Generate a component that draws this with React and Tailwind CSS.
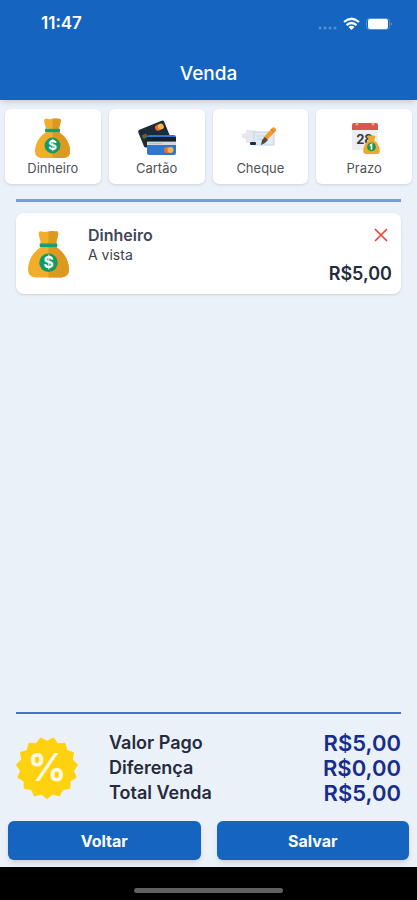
import React from "react";

function MoneyBag({ className }) {
  return (
    <svg viewBox="0 0 42 48" className={className} aria-hidden="true">
      <path d="M11 3Q11 0 14 1Q17 2 21 1Q25 0 28 1Q31 0 31 3C31 7 29 9 29 13H13C13 9 11 7 11 3Z" fill="#f2ad2b" />
      <path d="M21 1Q25 0 28 1Q31 0 31 3C31 7 29 9 29 13H21Z" fill="#dd9820" />
      <path d="M13 17H29C37 22 42 31 42 40Q42 48 34 48H8Q0 48 0 40C0 31 5 22 13 17Z" fill="#f2ad2b" />
      <path d="M21 17H29C37 22 42 31 42 40Q42 48 34 48H21Z" fill="#dd9820" />
      <rect x="12" y="13" width="18" height="4" rx="1" fill="#169f66" />
      <circle cx="21" cy="33" r="9.5" fill="#0f9b63" />
      <text x="21" y="38.5" textAnchor="middle" fontSize="16" fontWeight="700" fill="#fff">$</text>
    </svg>
  );
}

function CardsIcon() {
  return (
    <svg viewBox="0 0 40 40" className="h-10 w-10" aria-hidden="true">
      <g transform="rotate(-22 16 16)">
        <rect x="3" y="7" width="28" height="19" rx="2" fill="#1e2a36" />
        <rect x="5" y="13" width="5" height="4" rx="1" fill="#6d5c38" />
        <circle cx="23" cy="12" r="3" fill="#ef6a3a" />
        <circle cx="26" cy="12" r="3" fill="#f7b64a" />
      </g>
      <rect x="10" y="17" width="29" height="20" rx="2" fill="#2f77cc" />
      <rect x="10" y="19" width="29" height="4" fill="#15202c" />
      <rect x="10" y="24" width="29" height="3" fill="#d5d9df" />
      <rect x="12" y="25" width="13" height="1" fill="#dcb98d" />
      <circle cx="30" cy="32" r="3" fill="#ef6a3a" />
      <circle cx="33.5" cy="32" r="3" fill="#f7b64a" />
    </svg>
  );
}

function ChequeIcon() {
  return (
    <svg viewBox="0 0 40 40" className="h-10 w-10" aria-hidden="true">
      <path d="M2 16L6 15V12H14L17 14V25H6V21L2 20Z" fill="#e6e8eb" />
      <rect x="14" y="14" width="20" height="13" fill="#dfebf6" stroke="#c2d6e6" />
      <path d="M17 18H24M17 21H22" stroke="#c6d8e8" />
      <rect x="10" y="24" width="6" height="3" rx="1" fill="#1c2b50" />
      <path d="M23 20L32 10Q34 8 36 11Q37 13 35 14L27 22Z" fill="#f39b2e" />
      <path d="M21 27L22 22L25 19L28 22L25 25Z" fill="#4a4b4a" />
      <path d="M31 11L34 14" stroke="#d7682a" />
    </svg>
  );
}

function CalendarIcon() {
  return (
    <svg viewBox="0 0 40 40" className="h-10 w-10" aria-hidden="true">
      <rect x="8" y="7" width="26" height="25" rx="2" fill="#eeeef0" />
      <path d="M8 12V7Q8 5 10 5H32Q34 5 34 7V12Z" fill="#dc5555" />
      <circle cx="13" cy="6" r="1.5" fill="#f0b05a" />
      <circle cx="29" cy="6" r="1.5" fill="#f0b05a" />
      <text x="20.5" y="26" textAnchor="middle" fontSize="13" fontWeight="700" fill="#333a44">28</text>
      <svg x="19" y="17" width="17" height="19" viewBox="0 0 42 48">
        <path d="M11 3Q15 0 21 2Q27 0 31 3L28 14C37 20 42 31 42 40Q42 48 34 48H8Q0 48 0 40C0 31 5 20 14 14Z" fill="#f0a82b" />
        <circle cx="21" cy="30" r="11" fill="#179a5c" />
        <path d="M17 27L21 24V37" fill="none" stroke="#fff" strokeWidth="4" />
      </svg>
    </svg>
  );
}

const points = Array.from({ length: 30 }, (_, i) => {
  const r = i % 2 ? 26 : 30;
  const a = (i * Math.PI) / 15 + Math.PI / 2;
  return `${31 + r * Math.cos(a)},${31 + r * Math.sin(a)}`;
}).join(" ");

function PercentBadge() {
  return (
    <svg viewBox="0 0 62 62" className="h-[62px] w-[62px] shrink-0" aria-hidden="true">
      <polygon points={points} fill="#ffd20f" stroke="#ffd20f" strokeWidth="2" strokeLinejoin="round" />
      <text x="31" y="44" textAnchor="middle" fontSize="38" fontWeight="700" fill="#fff9e3">%</text>
    </svg>
  );
}

const methods = [
  { label: "Dinheiro", icon: <MoneyBag className="h-10 w-[35px]" /> },
  { label: "Cartão", icon: <CardsIcon /> },
  { label: "Cheque", icon: <ChequeIcon /> },
  { label: "Prazo", icon: <CalendarIcon /> },
];

const totals = [
  ["Valor Pago", "R$5,00"],
  ["Diferença", "R$0,00"],
  ["Total Venda", "R$5,00"],
];

export default function App() {
  return (
    <div className="flex min-h-screen flex-col bg-[#ebf1f8] font-['Inter','Liberation_Sans',sans-serif] text-[#252b3d]">
      <header className="bg-[#1565c0] text-white shadow-md">
        <div className="flex h-12 items-center justify-between pr-[25px] pl-[41px]">
          <span className="text-[17px] font-semibold">11:47</span>
          <svg viewBox="0 0 75 16" className="h-4 w-[75px]" aria-hidden="true">
            <g fill="#5590d4">
              <circle cx="3" cy="12" r="1.5" />
              <circle cx="8" cy="12" r="1.5" />
              <circle cx="13" cy="12" r="1.5" />
              <circle cx="18" cy="12" r="1.5" />
            </g>
            <g fill="none" stroke="#fff" strokeWidth="2.2">
              <path d="M27 6Q34.5 -0.5 42 6" />
              <path d="M29.5 9.2Q34.5 4.8 39.5 9.2" />
            </g>
            <path d="M31.5 11Q34.5 8.5 37.5 11L34.5 14Z" fill="#fff" />
            <rect x="49.5" y="2.5" width="23" height="11" rx="3" fill="none" stroke="#5590d4" />
            <path d="M74 6Q75.500 8 74 10Z" fill="#73a3dc" />
            <rect x="51" y="3" width="20" height="10" rx="2" fill="#fff" />
          </svg>
        </div>
        <h1 className="flex h-[52px] items-center justify-center text-[19px] font-medium">Venda</h1>
      </header>

      <main className="flex flex-1 flex-col">
        <div className="grid grid-cols-4 gap-2 px-[5px] pt-[9px]">
          {methods.map((m) => (
            <button key={m.label} type="button" className="flex h-[75px] flex-col items-center rounded-md bg-white pt-[9px] text-[13px] leading-5 text-[#505258] shadow-sm">
              {m.icon}
              <span>{m.label}</span>
            </button>
          ))}
        </div>
        <hr className="mx-4 mt-[15px] border-t-3 border-[#7b9bd5]" />

        <section className="mx-4 mt-[11px] flex h-[81px] rounded-lg bg-white pr-[9px] pl-3 shadow-sm">
          <MoneyBag className="mt-[17px] h-12 w-[41px] shrink-0" />
          <div className="ml-[19px] flex-1 pt-3">
            <h2 className="text-base leading-5 font-semibold text-[#41465a]">Dinheiro</h2>
            <p className="text-sm leading-5 text-[#3c3f4a]">A vista</p>
          </div>
          <div className="flex flex-col items-end justify-between pt-[15px] pb-2">
            <button type="button" aria-label="Remover" className="mr-1">
              <svg viewBox="0 0 14 14" className="h-[14px] w-[14px]">
                <path d="M1 1L13 13M13 1L1 13" stroke="#f23d32" strokeWidth="1.6" />
              </svg>
            </button>
            <span className="text-lg leading-6 font-semibold">R$5,00</span>
          </div>
        </section>

        <div className="flex-1" />

        <hr className="mx-4 border-t-2 border-[#4a70c4]" />
        <section className="mx-4 mt-4 flex items-center">
          <PercentBadge />
          <dl className="ml-[31px] flex-1">
            {totals.map(([label, value]) => (
              <div key={label} className="flex h-[25px] items-center justify-between font-semibold">
                <dt className="text-lg">{label}</dt>
                <dd className="text-[22px] leading-6 text-[#182c8c]">{value}</dd>
              </div>
            ))}
          </dl>
        </section>
        <div className="grid grid-cols-2 gap-4 px-2 pt-4 pb-[7px]">
          <button type="button" className="h-[39px] rounded-md bg-[#1565c0] text-base font-bold text-white shadow-md">Voltar</button>
          <button type="button" className="h-[39px] rounded-md bg-[#1565c0] text-base font-bold text-white shadow-md">Salvar</button>
        </div>
      </main>

      <footer className="flex h-[33px] justify-center bg-black pt-[21px]">
        <div className="h-[5px] w-[149px] rounded-full bg-[#606060]" />
      </footer>
    </div>
  );
}
